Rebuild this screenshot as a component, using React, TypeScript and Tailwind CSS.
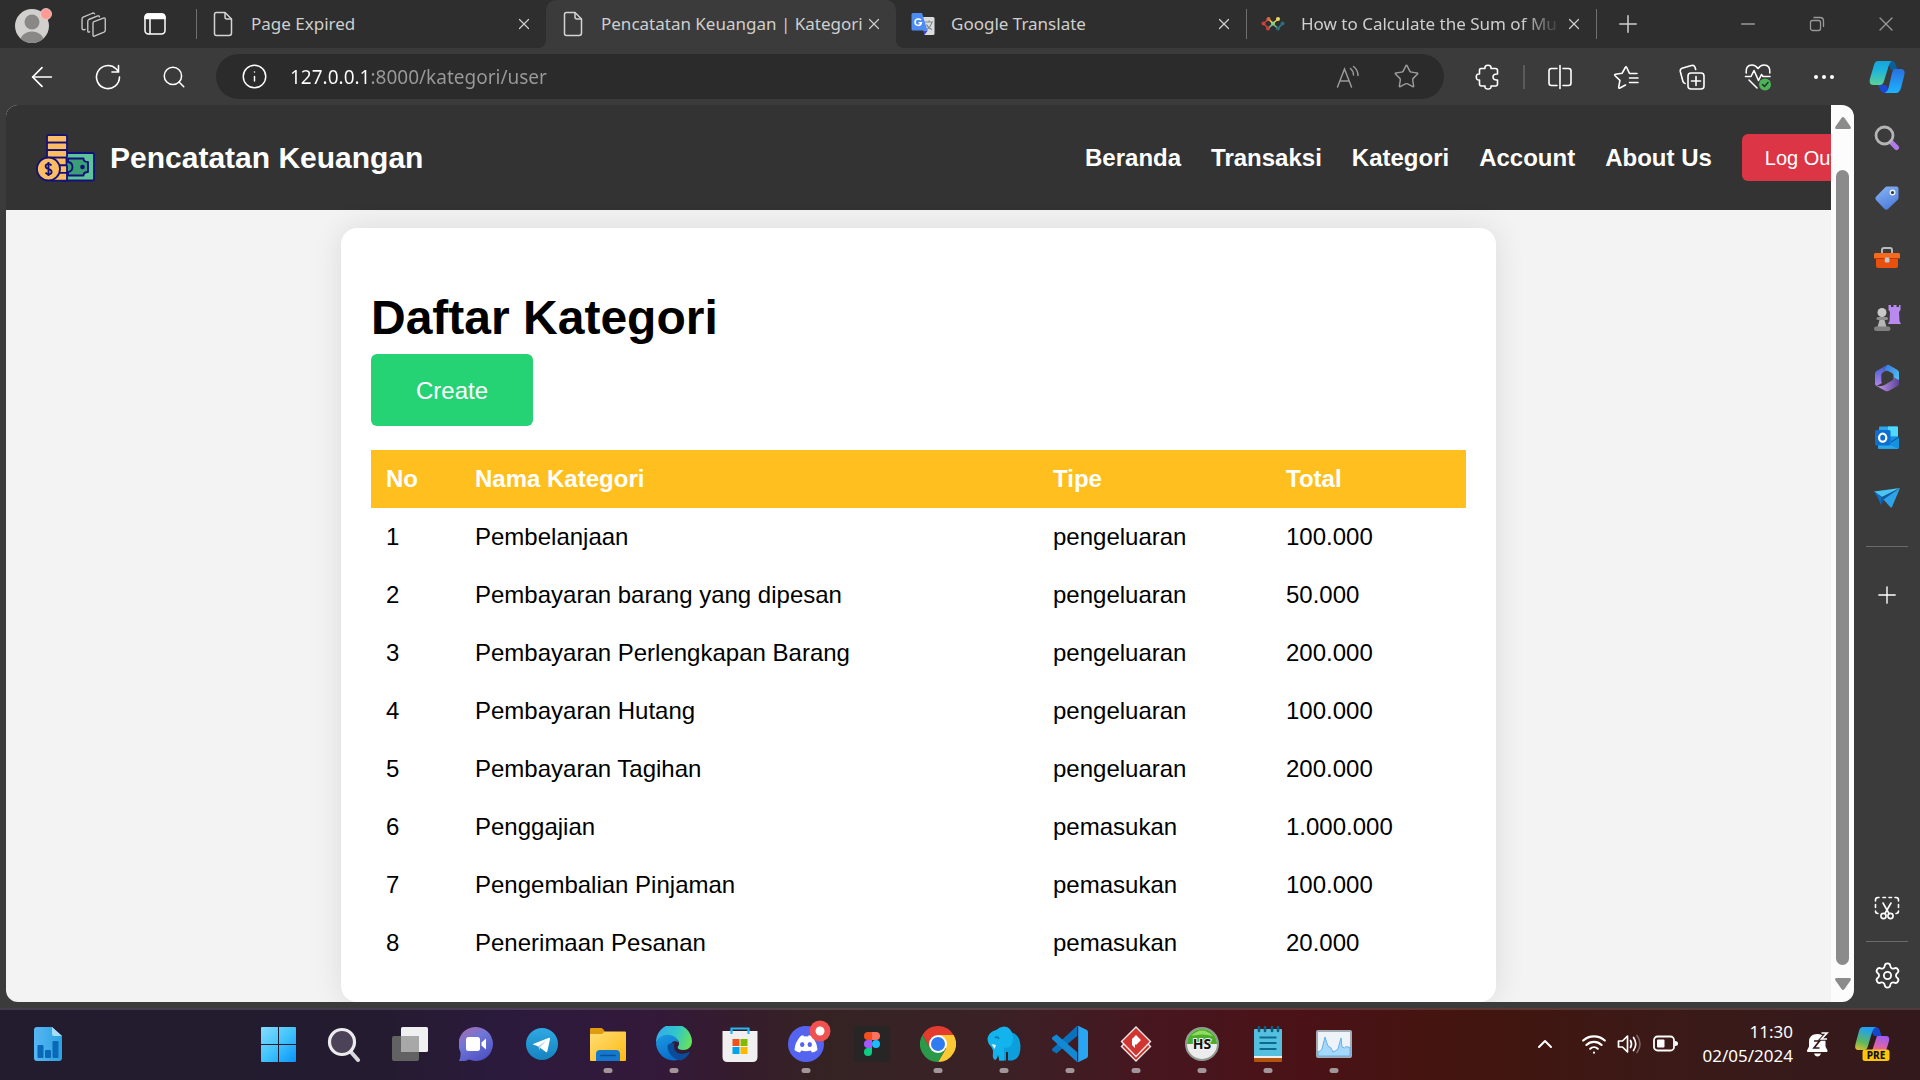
import React from "react";
import {
  ArrowLeft,
  ChevronUp,
  Info,
  Minus,
  Plus,
  Search,
  Settings,
  Star,
  Wifi,
  X,
} from "lucide-react";

/* ---------- Browser icons ---------- */

const Avatar = () => (
  <svg viewBox="0 0 38 38" className="size-[38px]">
    <defs>
      <clipPath id="avatar">
        <circle cx="18" cy="21" r="17" />
      </clipPath>
    </defs>
    <circle cx="18" cy="21" r="17" fill="#d2d0ce" />
    <g clipPath="url(#avatar)" fill="#8a8886">
      <circle cx="18" cy="17" r="7.5" />
      <ellipse cx="18" cy="37" rx="12" ry="10.5" />
    </g>
    <circle cx="32" cy="9" r="5.5" fill="#ff9b94" stroke="#e8d5d3" strokeWidth="0.8" />
  </svg>
);

const Workspaces = () => (
  <svg viewBox="0 0 24 24" className="size-[25px]" fill="none" stroke="#c8c8c8" strokeWidth="1.3" strokeLinejoin="round" strokeLinecap="round">
    <path d="M12.500 9.300 21.500 5.800q1.800-.6 1.800 1.200v10.500q0 1.200-1.200 1.800L13.300 23q-1.800.8-1.800-1.200V10.800q0-1.100 1-1.500Z" />
    <path d="M8.300 19 7.500 19.300q-1 .2-1-1V9q0-1.300 1-1.800L16 3.800q1.500-.5 1.700.8" />
    <path d="M4 16.800 3 17q-2 .3-2-1.500V6.800q0-1.300 1-1.800L11 1.200q1.600-.6 2 .6" />
  </svg>
);

const TabActions = () => (
  <svg viewBox="0 0 24 24" className="size-6" fill="none" stroke="#fff" strokeWidth="1.5">
    <rect x="2" y="2" width="20" height="20" rx="3.500" />
    <path d="M2 6.500V5.500Q2 2 5.500 2h13Q22 2 22 5.500V6.500Z" fill="#fff" />
    <path d="M7 7v15" />
  </svg>
);

const PageIcon = () => (
  <svg viewBox="0 0 20 26" className="h-[26px] w-5" fill="none" stroke="#d4d4d4" strokeWidth="1.500" strokeLinejoin="round">
    <path d="M3.500 1.500H12L18.500 8v14q0 2.500-2.500 2.500H3.500q-2 0-2-2v-19q0-2 2-2Z" />
    <path d="M12 1.500V6q0 2 2 2h4.500" />
  </svg>
);

const TranslateIcon = () => (
  <svg viewBox="0 0 24 24" className="size-6">
    <path d="M10 5h12q1.500 0 1.500 1.500v15q0 1.500-1.500 1.500h-8.500Z" fill="#dcdcdc" />
    <path d="M14 10h8M18 8.500V10m3 0q-1 5-6 8m.5-5.500q2 4 5.500 5" stroke="#7b8b90" fill="none" strokeWidth="1.200" />
    <path d="m12 18.500 4.800 0L13.500 23Z" fill="#3b48c4" />
    <path d="M2 1h9l5.500 17.500H2q-1.500 0-1.500-1.500V2.500Q.5 1 2 1Z" fill="#4d8bf5" />
    <path d="M10 8q-1.200-1.100-2.600-1a3.200 3.200 0 1 0 3 3.700H7.600" stroke="#fff" fill="none" strokeWidth="1.500" />
  </svg>
);

const NetworkFavicon = () => (
  <svg viewBox="0 0 24 16" className="h-4 w-6" strokeWidth="1.600" fill="none">
    <path d="M2.500 7.500 7.500 3M2.500 7.500 7 12" stroke="#c94040" />
    <path d="m7.500 3 4.500 4.500L17 3" stroke="#e3c862" />
    <path d="M7 12.500 12 8l5 4.500" stroke="#7fb59a" />
    <path d="m17 12.500 4.500-5" stroke="#2d7f8e" />
    <g fill="#c94040"><circle cx="2.500" cy="7.500" r="2" /><circle cx="7" cy="12.500" r="2" /></g>
    <circle cx="7.500" cy="3" r="2" fill="#e0683e" />
    <circle cx="12" cy="7.500" r="1.900" fill="#8fd07a" />
    <circle cx="17" cy="3" r="2" fill="#ecd964" />
    <g fill="#24727f"><circle cx="17" cy="12.500" r="2" /><circle cx="21.500" cy="7.500" r="1.900" /></g>
  </svg>
);

const RestoreIcon = () => (
  <svg viewBox="0 0 16 16" className="size-4" fill="none" stroke="#999" strokeWidth="1.300">
    <rect x="1.500" y="4.500" width="10" height="10" rx="2" />
    <path d="M4.500 1.500h6.500q3.500 0 3.500 3.500v6" />
  </svg>
);

const BackArrow = () => <ArrowLeft className="size-8" strokeWidth={1.3} />;

const Refresh = () => (
  <svg viewBox="0 0 26 26" className="size-[26px]" fill="none" stroke="#fff" strokeWidth="1.600" strokeLinecap="round">
    <path d="M24.500 13A11.500 11.500 0 1 1 21 4.800l2 2.200M23.500 1.500V8H17" />
  </svg>
);

const ReadAloud = () => (
  <svg viewBox="0 0 24 24" className="size-6" fill="none" stroke="#9a9a9a" strokeWidth="1.500" strokeLinecap="round">
    <path d="M1.500 22 8.500 4 15.500 22M4 16h9M14.500 3.500q3 2.500 3 6.500M17.500 1.500Q22 5 22 10.500" />
  </svg>
);

const Puzzle = () => (
  <svg viewBox="0 0 26 26" className="size-[26px]" fill="none" stroke="#fff" strokeWidth="1.600" strokeLinejoin="round">
    <path d="M6 4.500h4q-.5-3.200 3-3.200t3 3.200h4.500q2 0 2 2V10q-4.500-.3-4.500 3t4.500 3v4q0 2-2 2H16q.5 3-3 3t-3-3H6.500q-2 0-2-2v-4q-3.200.5-3.200-3t3.200-3V6.500q0-2 1.500-2Z" />
  </svg>
);

const SplitScreen = () => (
  <svg viewBox="0 0 26 26" className="size-[26px]" fill="none" stroke="#fff" strokeWidth="1.600" strokeLinecap="round">
    <path d="M10 4.500H4.500q-2.500 0-2.500 2.500v12q0 2.500 2.500 2.500H10M16 4.500h5.500Q24 4.500 24 7v12q0 2.500-2.500 2.500H16M13 1.500v23" />
  </svg>
);

const Favorites = () => (
  <svg viewBox="0 0 26 26" className="size-[26px]" fill="none" stroke="#fff" strokeWidth="1.600" strokeLinecap="round" strokeLinejoin="round">
    <path d="M24 9.500h-7.500l-2.800-6q-.7-1.400-1.400 0L9.200 9.200l-6.700 1q-1.500.3-.4 1.500l4.800 4.700-1.200 6.800q-.2 1.500 1.200.8l5.600-3M16.500 14H25M16.500 18.500H25" />
  </svg>
);

const Collections = () => (
  <svg viewBox="0 0 26 26" className="size-[26px]" fill="none" stroke="#fff" strokeWidth="1.600" strokeLinecap="round" strokeLinejoin="round">
    <rect x="9" y="9" width="16" height="16" rx="3" />
    <path d="M17 12.500v9M12.500 17h9M6 19.500q-1.700-.3-2.200-2.500L1.300 7.500Q.8 5 3 4.200L12.500 1.500q2.500-.6 3.400 1.500l.8 2.500" />
  </svg>
);

const Essentials = () => (
  <svg viewBox="0 0 28 28" className="size-7" fill="none" stroke="#fff" strokeWidth="1.600" strokeLinecap="round" strokeLinejoin="round">
    <path d="M2.200 10Q1.500 2 8 2q3.500 0 6 3.500Q16.500 2 20 2q6.500 0 5.800 8M1.500 13.500H7l3-6 4.500 10 3-6 1.500 2h7M5 17l8 8" />
    <circle cx="21" cy="21.500" r="6" fill="#4db25a" stroke="none" />
    <path d="m18.500 21.500 2 2 3.500-4" stroke="#1f3d22" />
  </svg>
);

const Dots = () => (
  <svg viewBox="0 0 22 6" className="h-1.5 w-[22px]" fill="#fff">
    <circle cx="3" cy="3" r="2" /><circle cx="11" cy="3" r="2" /><circle cx="19" cy="3" r="2" />
  </svg>
);

const CopilotEdge = () => (
  <svg viewBox="0 0 36 34" className="h-[34px] w-9">
    <defs>
      <linearGradient id="ceA" x1="0" y1="0" x2="0" y2="1"><stop offset="0" stopColor="#14a4dc" /><stop offset="0.400" stopColor="#1eb4dc" /><stop offset="1" stopColor="#5cd096" /></linearGradient>
      <linearGradient id="ceB" x1="0" y1="0" x2="0" y2="1"><stop offset="0" stopColor="#2b6fe0" /><stop offset="1" stopColor="#1cb4ff" /></linearGradient>
    </defs>
    <path d="M19 1h4q3 0 4 4l1.500 5H22Z" fill="#0a5f96" />
    <path d="M9 25h8l4 8h-5q-4 0-5-4Z" fill="#1947d8" />
    <path d="M9 1h14q-2.500 1-4 7l-4 13q-1 4-4 4H4.500Q-.5 25 1 18.500L5 5q1-4 4-4Z" fill="url(#ceA)" />
    <path d="M25 9h7q4.500 0 3.300 6L32 28q-1.500 5-5 5H15.500q3-1 4-5L23 13q.7-3 2-4Z" fill="url(#ceB)" />
  </svg>
);

/* ---------- Sidebar icons ---------- */

const SideSearch = () => (
  <svg viewBox="0 0 26 26" className="size-[26px]" fill="none">
    <path d="m17 17 5.500 5.500" stroke="#b07be8" strokeWidth="5" strokeLinecap="round" />
    <circle cx="10.500" cy="10.500" r="8.500" stroke="#b4b4b4" strokeWidth="2.800" />
  </svg>
);

const SideTag = () => (
  <svg viewBox="0 0 26 26" className="size-[26px]">
    <defs><linearGradient id="tag" x1="0" y1="0" x2="0.500" y2="1"><stop offset="0" stopColor="#8ab6f5" /><stop offset="1" stopColor="#4f7fdc" /></linearGradient></defs>
    <path d="M13 1.500h9.500q2 0 2 2V13q0 1.200-1 2L14 24q-1.800 1.500-3.500 0L2 15q-1.500-1.600 0-3.200L11 2.400q1-.9 2-.9Z" fill="url(#tag)" />
    <circle cx="18.500" cy="7.500" r="2.300" fill="#333" stroke="#e8f0ff" strokeWidth="1.400" />
  </svg>
);

const SideToolbox = () => (
  <svg viewBox="0 0 28 24" className="h-6 w-7">
    <path d="M9 8V4q0-2 2-2h6q2 0 2 2v4" fill="none" stroke="#b8bcc2" strokeWidth="1.900" />
    <path d="M3 11h22v9q0 2-2 2H5q-2 0-2-2Z" fill="#e8500e" />
    <path d="M2 7h24l1 1v4q0 1-1 1H2q-1 0-1-1V8Z" fill="#f46a1f" />
    <path d="M1 12.500h26" stroke="#b93a07" strokeWidth="1" />
    <rect x="11.800" y="11.500" width="4.600" height="5" rx="1.200" fill="#c3c9cf" />
  </svg>
);

const SideGames = () => (
  <svg viewBox="0 0 28 28" className="size-7">
    <path d="M15.500 1h2.500v2h2.500V1h3v2H26V1h1.500v5L26 8l.5 9 1.500 3H15l1.500-3L17 8l-1.500-2Z" fill="#b98aee" />
    <circle cx="9" cy="8.500" r="4.500" fill="#c8c8c8" />
    <rect x="3.500" y="13" width="11.500" height="3" rx="1.500" fill="#8f8f8f" />
    <path d="M6.500 16h5l2 7h-9Z" fill="#b5b5b5" />
    <rect x="1" y="22.500" width="16.500" height="4.500" rx="2.200" fill="#808080" />
  </svg>
);

const Side365 = () => (
  <svg viewBox="0 0 26 28" className="h-7 w-[26px]">
    <defs>
      <linearGradient id="m3a" x1="0" y1="0" x2="0" y2="1"><stop offset="0" stopColor="#3b5ed0" /><stop offset="1" stopColor="#b483ea" /></linearGradient>
      <linearGradient id="m3b" x1="0" y1="0" x2="1" y2="1"><stop offset="0" stopColor="#3a76dc" /><stop offset="1" stopColor="#52c7f4" /></linearGradient>
      <linearGradient id="m3c" x1="0" y1="0" x2="1" y2="0"><stop offset="0" stopColor="#c79af2" /><stop offset="1" stopColor="#5c4596" /></linearGradient>
    </defs>
    <path d="M13 1 2.500 7Q1 8 1 9.500v10q0 1.500 1.500 2.500L8 19q-.7-.7-.7-2V11q0-1.500 1.500-2.500L11 7q-1-4 2-6Z" fill="url(#m3a)" />
    <path d="M13 1q1-.5 2 0l8.500 5Q25 7 25 8.500V17l-5.500-3.500v-2q0-1.500-1.200-2.200L14 7q-1.500-.7-3 0-.5-4.500 2-6Z" fill="url(#m3b)" />
    <path d="M25 16v3.500q0 1.500-1.500 2.500L15 26.700q-2 1-4 0L2.500 22q4.500 1 8-1l7.500-4.500q1.500-1 1.500-3Z" fill="url(#m3c)" />
  </svg>
);

const SideOutlook = () => (
  <svg viewBox="0 0 26 26" className="size-[26px]">
    <rect x="5" y="1.500" width="19" height="12" rx="1" fill="#28a8ea" />
    <path d="M14 1.500h9q1 0 1 1V11H14Z" fill="#50d9ff" />
    <path d="M4 12h21v10.500q0 1.500-1.500 1.500H5.500Q4 24 4 22.500Z" fill="#1490df" />
    <path d="m4 14 20 9.800H5.500Q4 24 4 22.500Z" fill="#28a8ea" />
    <path d="m25 12-8 5" stroke="#0a4f8c" strokeWidth="1" />
    <rect x="1" y="5" width="15.500" height="15.500" rx="1.500" fill="#0f6fd0" />
    <ellipse cx="8.700" cy="12.700" rx="3.600" ry="4" fill="none" stroke="#fff" strokeWidth="2.200" />
  </svg>
);

const SidePlane = () => (
  <svg viewBox="0 0 28 22" className="h-[22px] w-7">
    <path d="M1 4.500 27 1 9 10Z" fill="#4ac3f7" />
    <path d="M1 4.500 9 10l-1 8-3-7Z" fill="#0e6fc0" />
    <path d="M8 18 9.500 10 27 1 12 12Z" fill="#0c5ca8" />
    <path d="M27 1 19 20q-.7 1-1.600.2L10.500 12.500Z" fill="#2ea3e8" />
  </svg>
);

const ScreenshotIcon = () => (
  <svg viewBox="0 0 26 24" className="h-6 w-[26px]" fill="none" stroke="#fff" strokeWidth="1.600" strokeLinecap="round">
    <path d="M1.500 5V4q0-2.500 2.500-2.500h1M9 1.500h2.500M15 1.500h2.500M21 1.500h1q2.500 0 2.500 2.500v1M24.500 8.500v3M1.500 8.500v3M1.500 15q0 2.500 2.500 2.500M24.500 15q0 2.500-2.500 2.500M9 7l6 10.500M17 7l-6 10.500" />
    <circle cx="9.500" cy="20" r="2.600" /><circle cx="16.500" cy="20" r="2.600" />
  </svg>
);

/* ---------- Site logo ---------- */

const MoneyLogo = () => (
  <svg viewBox="0 0 59 48" className="h-12 w-[59px]" stroke="#14107a" strokeWidth="1.800" strokeLinejoin="round">
    <rect x="24" y="19" width="34" height="27.500" rx="1.500" fill="#5dc49a" />
    <path d="M32 24.500h15.500q0 3.500 4.500 3.500v10q-4.500 0-4.500 3.500H32Z" fill="#3a9e76" />
    <circle cx="46.500" cy="33" r="2.300" fill="#14107a" stroke="none" />
    <path d="M29 27.500q7.500 0 7.500 5.500t-7.500 5.500Z" fill="#3a9e76" />
    <g fill="#fdbd63">
      <rect x="11" y="1.200" width="20" height="7.500" rx="1.300" />
      <rect x="11" y="8.700" width="20" height="7.500" rx="1.300" />
      <rect x="11" y="16.200" width="20" height="7.500" rx="1.300" />
      <rect x="14" y="23.700" width="16.500" height="7.600" rx="1" />
      <rect x="16" y="31.300" width="15" height="7.600" rx="1" />
      <rect x="14" y="38.900" width="17" height="7.800" rx="1" />
      <circle cx="12.500" cy="35" r="11.500" />
    </g>
    <path d="M15.500 31.500q-2.500-2.800-5.300-.8c-1.700 2.100.2 3.600 2.500 4.300s3.900 2.700 2.300 4.500q-3 1.800-5.500-.9M12.500 28v14" fill="none" strokeWidth="1.900" />
  </svg>
);

/* ---------- Taskbar icons ---------- */

const Widget = () => (
  <svg viewBox="0 0 28 34" className="h-[34px] w-7">
    <defs><linearGradient id="wd" x1="0" x2="1"><stop offset="0" stopColor="#58b6f4" /><stop offset="1" stopColor="#2aa2e0" /></linearGradient></defs>
    <path d="M3 0h15l10 9v22q0 3-3 3H3q-3 0-3-3V3q0-3 3-3Z" fill="url(#wd)" />
    <path d="M18 0l10 9h-8q-2 0-2-2Z" fill="#a8dcfb" />
    <g fill="#0a68b8"><rect x="3.500" y="18" width="6" height="13" rx="1" /><rect x="11" y="23" width="6" height="8" rx="1" /><rect x="18.500" y="14" width="6" height="17" rx="1" /></g>
  </svg>
);

const Start = () => (
  <svg viewBox="0 0 35 35" className="size-[35px]">
    <defs><linearGradient id="wn" gradientUnits="userSpaceOnUse" x1="0" y1="0" x2="35" y2="35"><stop offset="0" stopColor="#86dcff" /><stop offset="0.500" stopColor="#42c4fb" /><stop offset="1" stopColor="#0a94fb" /></linearGradient></defs>
    <path d="M1 0h16v17H0V1q0-1 1-1ZM18 0h16q1 0 1 1v16H18ZM0 18h17v17H1q-1 0-1-1ZM18 18h17v16q0 1-1 1H18Z" fill="url(#wn)" />
  </svg>
);

const TaskSearch = () => (
  <svg viewBox="0 0 34 36" className="h-9 w-[34px]" fill="none">
    <path d="m24 26 7 8" stroke="#d8d8dc" strokeWidth="4" strokeLinecap="round" />
    <circle cx="15" cy="16" r="12.500" fill="#4c4358" stroke="#ececee" strokeWidth="3.200" />
  </svg>
);

const TaskView = () => (
  <svg viewBox="0 0 36 34" className="h-[34px] w-9">
    <rect x="0" y="9" width="27" height="25" rx="2" fill="#626262" />
    <rect x="9" y="0" width="27" height="25" rx="1.500" fill="#f0f0f0" />
    <rect x="9" y="9" width="18" height="16" fill="#a8a8a8" />
  </svg>
);

const Chat = () => (
  <svg viewBox="0 0 34 34" className="size-[34px]">
    <defs><linearGradient id="ch" x1="0" y1="0" x2="0.600" y2="1"><stop offset="0" stopColor="#b06aa8" /><stop offset="0.450" stopColor="#7176d8" /><stop offset="1" stopColor="#5055c4" /></linearGradient></defs>
    <path d="M17 0a17 17 0 1 1-7 32.500Q5 35 0 34q2-4 1.500-9A17 17 0 0 1 17 0Z" fill="url(#ch)" />
    <rect x="7" y="10" width="14" height="14" rx="2.500" fill="#fff" />
    <path d="m22.500 15.500 4.500-4v11l-4.500-4Z" fill="#fff" />
  </svg>
);

const Telegram = () => (
  <svg viewBox="0 0 32 32" className="size-8">
    <defs><linearGradient id="tg" x1="0" y1="0" x2="0" y2="1"><stop offset="0" stopColor="#2fa9e3" /><stop offset="1" stopColor="#1583c0" /></linearGradient></defs>
    <circle cx="16" cy="16" r="16" fill="url(#tg)" />
    <path d="M6.500 16.200 23 9.800q1.200-.3 1 1.100l-2.700 12.500q-.4 1.200-1.500.5L12.500 18.600Z" fill="#fff" />
    <path d="m12.300 18.300 8-5.500-6 6-.5 3.800Z" fill="#a9cfe6" />
  </svg>
);

const Explorer = () => (
  <svg viewBox="0 0 36 33" className="h-[33px] w-9">
    <defs><linearGradient id="ex" x1="0" y1="0" x2="1" y2="1"><stop offset="0" stopColor="#ffde74" /><stop offset="1" stopColor="#fdb914" /></linearGradient></defs>
    <path d="M1 0h10q1 0 2 1l3 4H36v6H0V1q0-1 1-1Z" fill="#e09c0c" />
    <path d="M0 6h12l3-2.500H35q1 0 1 1V32q0 1-1 1H1q-1 0-1-1Z" fill="url(#ex)" />
    <path d="M6 33v-7q0-4 4-4h16q4 0 4 4v7Z" fill="#1478cc" />
    <path d="M11 27.500h14" stroke="#0a4f94" strokeWidth="1.600" strokeLinecap="round" />
  </svg>
);

const EdgeLogo = () => (
  <svg viewBox="0 0 36 36" className="size-9">
    <defs>
      <linearGradient id="e1" x1="0" y1="0.300" x2="1" y2="0.600"><stop offset="0" stopColor="#35a9ea" /><stop offset="0.500" stopColor="#30c5cf" /><stop offset="1" stopColor="#66e25a" /></linearGradient>
      <linearGradient id="e2" x1="0" y1="0" x2="0.500" y2="1"><stop offset="0" stopColor="#1b9be4" /><stop offset="1" stopColor="#0a6cc8" /></linearGradient>
    </defs>
    <path d="M0 17A18 18 0 0 1 36 15c0 6-4 9-8.500 9-5 0-6.500-1.500-5.500-3.500 2-3 1-6-2-7.500C13 9.500 3 10.500 0 17Z" fill="url(#e1)" />
    <path d="M0 18c1-7 8-10.500 14-9 5 1 8.500 4 8.500 8-2-3-8-2-8.500 4-.3 8 7 12 12 11.500A18 18 0 0 1 0 18Z" fill="url(#e2)" />
    <path d="M11.500 20c0 8 7 14 13.500 14.500 4-1.500 7-4.500 8.500-7.500.3-1-.5-1.200-1.300-.7-5 2.700-13.200 2.200-14.200-5.300-.2-1.500 0-2.500.7-3.500-3-1-7.200.5-7.200 2.500Z" fill="#0b4c9a" />
  </svg>
);

const Store = () => (
  <svg viewBox="0 0 36 36" className="size-9">
    <path d="M9.500 8V2.500h17V8" fill="none" stroke="#28b4ee" strokeWidth="2.200" />
    <path d="M.5 5h35v26q0 5-5 5h-25q-5 0-5-5Z" fill="#f0f0f0" />
    <path d="M9.500 8V4.500M26.500 8V4.500" stroke="#28b4ee" strokeWidth="2.200" />
    <path d="M10.500 13h7v7h-7Z" fill="#f1511b" /><path d="M18.500 13h7v7h-7Z" fill="#80ba01" />
    <path d="M10.500 21h7v7h-7Z" fill="#00a3ee" /><path d="M18.500 21h7v7h-7Z" fill="#fbb900" />
  </svg>
);

const Discord = () => (
  <svg viewBox="0 0 36 36" className="size-9 overflow-visible">
    <circle cx="18" cy="18" r="18" fill="#5564f0" />
    <path d="M12.500 10.200q1.200-.8 2.800-1l.7 1.300q2-.3 4 0l.7-1.300q1.600.2 2.900 1Q29 16 29.500 24q-2.500 2-5.500 2.600l-1.300-2.200q-4.700 1.600-9.400 0L12 26.600Q9 26 6.500 24 7 16 12.500 10.200Z" fill="#fff" />
    <ellipse cx="14.200" cy="18.500" rx="2.200" ry="2.500" fill="#5564f0" /><ellipse cx="21.800" cy="18.500" rx="2.200" ry="2.500" fill="#5564f0" />
    <circle cx="32" cy="5" r="10.500" fill="#f05252" /><circle cx="32" cy="5" r="4.500" fill="#fff" />
  </svg>
);

const Figma = () => (
  <svg viewBox="0 0 36 36" className="size-9">
    <rect width="36" height="36" rx="2" fill="#272525" />
    <path d="M18 6v8h-4a4 4 0 0 1 0-8Z" fill="#f24e1e" /><path d="M18 6h4a4 4 0 0 1 0 8h-4Z" fill="#ff7262" />
    <path d="M18 14v8h-4a4 4 0 0 1 0-8Z" fill="#a259ff" /><circle cx="22" cy="18" r="4" fill="#1abcfe" />
    <path d="M14 22h4v4a4 4 0 1 1-4-4Z" fill="#0acf83" />
  </svg>
);

const Chrome = () => (
  <svg viewBox="0 0 36 36" className="size-9">
    <path d="M2.400 9A18 18 0 0 1 33.600 9L18 9.500 10 22.500Z" fill="#e33b2e" />
    <path d="M33.600 9A18 18 0 0 1 18 36l8-13.500L18 9Z" fill="#fcc934" />
    <path d="M2.400 9A18 18 0 0 0 18 36l7.800-13.500H10.200Z" fill="#2a9a48" />
    <circle cx="18" cy="18" r="9" fill="#fff" /><circle cx="18" cy="18" r="7" fill="#2f7bf0" />
  </svg>
);

const Elephant = () => (
  <svg viewBox="0 0 34 36" className="h-9 w-[34px]">
    <path d="M23 6q10 2 10.500 14 0 13-8 14.500H21V26h-2v8.500h-7V24Z" fill="#0ba0dc" />
    <path d="M9 4q4-3.500 8-3.500 8 .5 9 10.500.5 10-7 11-1.500 0-2-1v13.500h-4.500L11 29q-1 4-2.500 5Q5 33 6 27q.5-4-3-7.500Q.5 17 .5 12 2 6 9 4Z" fill="#13b3ee" />
    <path d="M8 12q2-2.500 4 1" fill="none" stroke="#0873a5" strokeWidth="1.400" />
    <path d="m4.500 18 4.500 1-1.500 4Z" fill="#e8f7fd" />
  </svg>
);

const VsCode = () => (
  <svg viewBox="0 0 36 36" className="size-9">
    <path d="M25 0v10L4.500 27.500.5 25q-1-1.500 0-2.500Z" fill="#0a72bd" />
    <path d="M25 36V26L4.500 8.500.5 11q-1 1.500 0 2.500Z" fill="#1389d6" />
    <path d="M25 0q1-.3 2 .2l7.500 3.600Q36 4.500 36 6v24q0 1.500-1.500 2.200L27 35.800q-1 .5-2 .2l1.200-1V1Z" fill="#2aa5f2" />
  </svg>
);

const VisualParadigm = () => (
  <svg viewBox="0 0 32 36" className="h-9 w-8">
    <path d="M16 5.500 30.500 20.500 16 35 1.500 20.500Z" fill="#c9302c" stroke="#f5e9e9" strokeWidth="1.400" />
    <path d="M16 1 30.500 15.500 16 30.500 1.500 15.500Z" fill="#d03532" stroke="#f5e9e9" strokeWidth="1.400" />
    <path d="m16 9 5 5-5 5-1-1v4l-3-3v-6Z" fill="#fff" />
  </svg>
);

const HeidiSql = () => (
  <svg viewBox="0 0 34 34" className="size-[34px]">
    <circle cx="17" cy="17" r="16" fill="#ececec" stroke="#8f9a94" strokeWidth="2" />
    <path d="M2 17a15 15 0 0 1 30 0Z" fill="#4aae28" />
    <path d="M6 9q11-11 22 0-11-3-22 0Z" fill="#93da62" />
    <text x="17" y="22" textAnchor="middle" fontFamily="Noto Sans, sans-serif" fontWeight="700" fontSize="14" fill="#111" stroke="#f4f4f4" strokeWidth="2" paintOrder="stroke">HS</text>
  </svg>
);

const Notepad = () => (
  <svg viewBox="0 0 28 36" className="h-9 w-7">
    <rect x="0" y="30" width="28" height="6" rx="1" fill="#b2540d" />
    <rect x="0" y="28" width="28" height="4" fill="#efefef" />
    <path d="M1 3h26q1 0 1 1v26H0V4q0-1 1-1Z" fill="#55bfe0" />
    <path d="M5.500 11.500h17M5.500 17h17M5.500 23h17" stroke="#0d6a8e" strokeWidth="1.800" />
    <path d="M5 1v4M11 1v4M18 1v4M24 1v4" stroke="#0d5f80" strokeWidth="2.600" strokeLinecap="round" />
  </svg>
);

const TaskManager = () => (
  <svg viewBox="0 0 36 28" className="h-7 w-9">
    <rect x="1" y="1" width="34" height="26" rx="1" fill="#eef3f8" stroke="#a4acb6" strokeWidth="2" />
    <path d="M2 22q3-1 4-3l3-12q2 7 3 9l3 2 2 4q3-1 5-3l3-11 1 9q3 2 4-.5l4 1V26H2Z" fill="#a6d8fb" stroke="#5fb0ec" strokeWidth="1" />
  </svg>
);

const Volume = () => (
  <svg viewBox="0 0 26 22" className="h-[22px] w-[26px]" fill="none" stroke="#fff" strokeWidth="1.700" strokeLinecap="round" strokeLinejoin="round">
    <path d="M1.500 8v6h4l5 5V3l-5 5ZM13.500 7.500q2 3.500 0 7M16.500 4.500q4.500 6.500 0 13" />
    <path d="M20 2.500q6 8.500 0 17" stroke="#7d605c" />
  </svg>
);

const Battery = () => (
  <svg viewBox="0 0 26 18" className="h-[18px] w-[26px]">
    <rect x="1" y="1.500" width="20" height="14" rx="3.500" fill="none" stroke="#fff" strokeWidth="1.800" />
    <rect x="4" y="4.500" width="7.500" height="8" rx="1" fill="#fff" />
    <path d="M22 6q3 0 3 2.500T22 11Z" fill="#fff" />
  </svg>
);

const Bell = () => (
  <svg viewBox="0 0 24 26" className="h-[26px] w-6">
    <path d="M11.500 3q8 0 8 8v4.500l2 4q.3 1.500-1 1.500H2q-1.300 0-1-1.500l2-4V11q0-8 8.500-8Z" fill="#fff" />
    <path d="M8 22.500h7q-1 3-3.500 3T8 22.500Z" fill="#fff" />
    <path d="M8 10h5.500L8 17h5.500" fill="none" stroke="#38191a" strokeWidth="1.700" />
    <path d="M15.500 2h5.500l-5.500 6H21" fill="none" stroke="#38191a" strokeWidth="3.600" />
    <path d="M15.500 2h5.500l-5.500 6H21" fill="none" stroke="#fff" strokeWidth="1.700" />
  </svg>
);

const CopilotPre = () => (
  <svg viewBox="0 0 36 36" className="size-9">
    <defs>
      <linearGradient id="cpA" x1="0.300" y1="0" x2="0" y2="1"><stop offset="0" stopColor="#1fa0f2" /><stop offset="0.600" stopColor="#5fb85e" /><stop offset="1" stopColor="#e8c22a" /></linearGradient>
      <linearGradient id="cpB" x1="0.600" y1="0" x2="0.300" y2="1"><stop offset="0" stopColor="#a05cf0" /><stop offset="1" stopColor="#f5688a" /></linearGradient>
    </defs>
    <path d="M15 1h6q4 0 5 4l1.500 5H20Z" fill="#1747c8" />
    <path d="M9 1h13q-3 1-4.500 7L14 20q-1 4-4 4H4.500Q0 24 1.500 18L5 5q1-4 4-4Z" fill="url(#cpA)" />
    <path d="M23 10h9q4 0 3 5l-3 10H18Z" fill="url(#cpB)" />
    <rect x="8.500" y="23.500" width="27" height="11.500" rx="2.500" fill="#fdc50c" />
    <text x="22" y="32.500" textAnchor="middle" fontFamily="Noto Sans, sans-serif" fontWeight="800" fontSize="10" fill="#111">PRE</text>
  </svg>
);

/* ---------- Data ---------- */

const tabs = [
  { title: "Page Expired", icon: <PageIcon />, active: false, divider: true, fade: false },
  { title: "Pencatatan Keuangan | Kategori", icon: <PageIcon />, active: true, divider: false, fade: false },
  { title: "Google Translate", icon: <TranslateIcon />, active: false, divider: false, fade: false },
  { title: "How to Calculate the Sum of Mu", icon: <NetworkFavicon />, active: false, divider: true, fade: true },
];

const navLinks = ["Beranda", "Transaksi", "Kategori", "Account", "About Us"];

const categories = [
  ["Pembelanjaan", "pengeluaran", "100.000"],
  ["Pembayaran barang yang dipesan", "pengeluaran", "50.000"],
  ["Pembayaran Perlengkapan Barang", "pengeluaran", "200.000"],
  ["Pembayaran Hutang", "pengeluaran", "100.000"],
  ["Pembayaran Tagihan", "pengeluaran", "200.000"],
  ["Penggajian", "pemasukan", "1.000.000"],
  ["Pengembalian Pinjaman", "pemasukan", "100.000"],
  ["Penerimaan Pesanan", "pemasukan", "20.000"],
];

const sideApps = [
  { label: "Search", icon: <SideSearch /> },
  { label: "Shopping", icon: <SideTag /> },
  { label: "Tools", icon: <SideToolbox /> },
  { label: "Games", icon: <SideGames /> },
  { label: "Microsoft 365", icon: <Side365 /> },
  { label: "Outlook", icon: <SideOutlook /> },
  { label: "Drop", icon: <SidePlane /> },
];

const taskApps = [
  { label: "Start", icon: <Start />, running: false },
  { label: "Search", icon: <TaskSearch />, running: false },
  { label: "Task View", icon: <TaskView />, running: false },
  { label: "Chat", icon: <Chat />, running: false },
  { label: "Telegram", icon: <Telegram />, running: false },
  { label: "File Explorer", icon: <Explorer />, running: true },
  { label: "Edge", icon: <EdgeLogo />, running: true },
  { label: "Store", icon: <Store />, running: false },
  { label: "Discord", icon: <Discord />, running: true },
  { label: "Figma", icon: <Figma />, running: false },
  { label: "Chrome", icon: <Chrome />, running: true },
  { label: "Laragon", icon: <Elephant />, running: true },
  { label: "Visual Studio Code", icon: <VsCode />, running: true },
  { label: "Visual Paradigm", icon: <VisualParadigm />, running: true },
  { label: "HeidiSQL", icon: <HeidiSql />, running: true },
  { label: "Notepad", icon: <Notepad />, running: true },
  { label: "Task Manager", icon: <TaskManager />, running: true },
];

/* ---------- Sections ---------- */

function IconButton({ label, className, children }: { label: string; className: string; children: React.ReactNode }) {
  return (
    <button type="button" aria-label={label} className={`flex shrink-0 items-center justify-center ${className}`}>
      {children}
    </button>
  );
}

function TabStrip() {
  return (
    <div className="flex h-12 shrink-0 items-stretch bg-[#2e2e2e] text-[#cfcfcf]">
      <div className="flex w-[196px] shrink-0 items-center pl-0.5">
        <IconButton label="Profile" className="w-[61px]"><Avatar /></IconButton>
        <IconButton label="Workspaces" className="w-[61px]"><Workspaces /></IconButton>
        <IconButton label="Tab actions" className="w-[61px]"><TabActions /></IconButton>
      </div>
      {tabs.map((t) => (
        <div
          key={t.title}
          className={`relative flex w-[350px] min-w-0 items-center ${
            t.active
              ? "rounded-t-[10px] bg-[#3b3b3b] before:absolute before:bottom-0 before:-left-2 before:size-2 before:bg-[radial-gradient(circle_at_0_0,transparent_8px,#3b3b3b_8px)] after:absolute after:-right-2 after:bottom-0 after:size-2 after:bg-[radial-gradient(circle_at_100%_0,transparent_8px,#3b3b3b_8px)]"
              : ""
          }`}
        >
          <span className={`mr-3.5 h-[30px] w-px shrink-0 ${t.divider ? "bg-[#707070]" : ""}`} />
          <button type="button" className="flex min-w-0 flex-1 items-center gap-4">
            <span className="flex w-6 shrink-0 justify-center">{t.icon}</span>
            <span
              className={`flex-1 text-left text-[17px] leading-6 whitespace-nowrap ${
                t.fade ? "[mask-image:linear-gradient(to_right,#000_calc(100%-40px),transparent)]" : ""
              }`}
            >
              {t.title}
            </span>
          </button>
          <IconButton label={`Close ${t.title}`} className="mr-2.5 w-6"><X className="size-[18px]" strokeWidth={1.6} /></IconButton>
        </div>
      ))}
      <div className="h-[30px] w-px self-center bg-[#707070]" />
      <IconButton label="New tab" className="w-[62px]"><Plus className="size-7" strokeWidth={1.3} /></IconButton>
      <div className="flex-1" />
      <IconButton label="Minimize" className="w-[69px] text-[#999]"><Minus className="size-[22px]" strokeWidth={1.4} /></IconButton>
      <IconButton label="Restore" className="w-[69px]"><RestoreIcon /></IconButton>
      <IconButton label="Close window" className="w-[69px] text-[#999]"><X className="size-6" strokeWidth={1.3} /></IconButton>
    </div>
  );
}

function Toolbar() {
  return (
    <div className="flex h-[57px] shrink-0 items-center pl-[9px] text-white">
      <IconButton label="Back" className="w-[66px]"><BackArrow /></IconButton>
      <IconButton label="Refresh" className="w-[66px]"><Refresh /></IconButton>
      <IconButton label="Search" className="w-[66px]"><Search className="size-[26px]" strokeWidth={1.4} /></IconButton>
      <div className="mr-[11px] ml-[9px] flex h-[45px] min-w-0 flex-1 items-center rounded-full bg-[#2b2b2b] pr-2 pl-[25px]">
        <Info className="size-[27px] shrink-0" strokeWidth={1.3} />
        <input
          aria-label="Address"
          defaultValue="127.0.0.1:8000/kategori/user"
          className="ml-[22px] min-w-0 flex-1 bg-[linear-gradient(to_right,#ffffff_81px,#9a9a9a_81px)] bg-clip-text text-[19px] leading-7 text-transparent outline-none"
        />
        <IconButton label="Read aloud" className="w-[59px]"><ReadAloud /></IconButton>
        <IconButton label="Add to favorites" className="w-[59px] text-[#9a9a9a]"><Star className="size-[27px]" strokeWidth={1.3} /></IconButton>
      </div>
      <IconButton label="Extensions" className="w-[66px]"><Puzzle /></IconButton>
      <span className="mx-0.5 h-6 w-0.5 bg-[#5a5a5a]" />
      <IconButton label="Split screen" className="w-[66px]"><SplitScreen /></IconButton>
      <IconButton label="Favorites" className="w-[66px]"><Favorites /></IconButton>
      <IconButton label="Collections" className="w-[66px]"><Collections /></IconButton>
      <IconButton label="Browser essentials" className="w-[66px]"><Essentials /></IconButton>
      <IconButton label="Settings and more" className="w-[66px]"><Dots /></IconButton>
      <IconButton label="Copilot" className="mr-[3px] w-[60px]"><CopilotEdge /></IconButton>
    </div>
  );
}

function SiteHeader() {
  return (
    <header className="flex h-[105px] items-center overflow-hidden bg-[#333] pl-[30px] text-white">
      <a href="#home" className="flex items-center gap-[15px] text-3xl font-bold whitespace-nowrap">
        <MoneyLogo />
        Pencatatan Keuangan
      </a>
      <nav className="ml-auto flex gap-[30px] text-2xl font-bold whitespace-nowrap">
        {navLinks.map((l) => (
          <a key={l} href={`#${l}`}>{l}</a>
        ))}
      </nav>
      <button type="button" className="-mr-7 ml-[30px] h-[47px] shrink-0 rounded-md bg-[#dc3545] px-[23px] text-xl">
        Log Out
      </button>
    </header>
  );
}

function CategoryCard() {
  return (
    <main className="mx-auto mt-[18px] w-full max-w-[1155px] rounded-2xl bg-white p-[30px] text-black shadow-[0_0_30px_rgba(0,0,0,0.1)]">
      <h1 className="mt-8 text-5xl leading-[56px] font-bold">Daftar Kategori</h1>
      <button type="button" className="mt-2 h-[72px] rounded-md bg-[#25d375] px-[45px] pt-0.5 text-2xl text-white">
        Create
      </button>
      <table className="mt-6 w-full table-fixed text-left text-2xl leading-7">
        <colgroup>
          <col className="w-[89px]" />
          <col />
          <col className="w-[233px]" />
          <col className="w-[195px]" />
        </colgroup>
        <thead>
          <tr className="bg-[#ffc01f] text-white">
            {["No", "Nama Kategori", "Tipe", "Total"].map((h) => (
              <th key={h} scope="col" className="p-[15px] font-bold">{h}</th>
            ))}
          </tr>
        </thead>
        <tbody>
          {categories.map(([name, kind, total], i) => (
            <tr key={name}>
              <td className="p-[15px]">{i + 1}</td>
              <td className="p-[15px]">{name}</td>
              <td className="p-[15px]">{kind}</td>
              <td className="p-[15px]">{total}</td>
            </tr>
          ))}
        </tbody>
      </table>
    </main>
  );
}

function PageScrollbar() {
  return (
    <div className="flex w-[23px] shrink-0 flex-col items-center bg-[#fcfcfc] py-3">
      <svg viewBox="0 0 16 12" className="h-3 w-4 shrink-0" fill="#8b8b8b"><path d="M6.500 1q1.500-2 3 0l6 8.500q1 2.500-1 2.500h-13q-2 0-1-2.500Z" /></svg>
      <div className="mt-[41px] mb-[13px] w-[13px] flex-1 rounded-full bg-[#8b8b8b]" />
      <svg viewBox="0 0 16 12" className="h-3 w-4 shrink-0 rotate-180" fill="#8b8b8b"><path d="M6.500 1q1.500-2 3 0l6 8.500q1 2.500-1 2.500h-13q-2 0-1-2.500Z" /></svg>
    </div>
  );
}

function EdgeSidebar() {
  return (
    <aside className="flex w-[66px] shrink-0 flex-col items-center py-[3px] text-white">
      {sideApps.map((a) => (
        <IconButton key={a.label} label={a.label} className="size-15">{a.icon}</IconButton>
      ))}
      <hr className="my-[18px] w-[42px] border-[#6b6b6b]" />
      <IconButton label="Customize" className="size-15"><Plus className="size-7" strokeWidth={1.2} /></IconButton>
      <div className="flex-1" />
      <IconButton label="Screenshot" className="size-15"><ScreenshotIcon /></IconButton>
      <hr className="my-[3px] w-[42px] border-[#6b6b6b]" />
      <IconButton label="Settings" className="size-15"><Settings className="size-[29px]" strokeWidth={1.5} /></IconButton>
    </aside>
  );
}

function Taskbar() {
  return (
    <footer className="flex h-[72px] shrink-0 items-stretch border-t-2 border-white/15 bg-[linear-gradient(to_right,#231b2e_0%,#241b30_20%,#2b1a3c_26%,#33193a_34%,#351d2b_39%,#352324_43%,#3a2126_52%,#47161f_60%,#4a1216_68%,#42150f_77%,#3a1a18_88%,#33191c_100%)] bg-origin-border pb-0.5 text-white">
      <div className="flex w-[245px] shrink-0">
        <IconButton label="Widgets" className="w-24"><Widget /></IconButton>
      </div>
      {taskApps.map((a) => (
        <button key={a.label} type="button" aria-label={a.label} className="relative flex w-[66px] shrink-0 items-center justify-center">
          {a.icon}
          {a.running && <span className="absolute bottom-[5px] left-1/2 h-[5px] w-[9px] -translate-x-1/2 rounded-full bg-[#a3969b]" />}
        </button>
      ))}
      <div className="flex-1" />
      <IconButton label="Hidden icons" className="w-10"><ChevronUp className="size-6" strokeWidth={2} /></IconButton>
      <button type="button" aria-label="Network, volume and battery" className="ml-4 flex items-center gap-2.5">
        <Wifi className="size-[26px]" strokeWidth={2} />
        <Volume />
        <Battery />
      </button>
      <button type="button" className="ml-6 flex flex-col justify-center text-right text-[17px] leading-6">
        <span>11:30</span>
        <span>02/05/2024</span>
      </button>
      <IconButton label="Notifications" className="ml-[13px] w-6"><Bell /></IconButton>
      <IconButton label="Copilot preview" className="mr-[22px] ml-4 w-[52px]"><CopilotPre /></IconButton>
    </footer>
  );
}

export default function App() {
  return (
    <div className="flex h-screen flex-col overflow-hidden bg-[#3b3b3b] font-['Noto_Sans',sans-serif]">
      <TabStrip />
      <Toolbar />
      <div className="flex min-h-0 flex-1">
        <div className="mb-1.5 ml-1.5 flex min-w-0 flex-1 overflow-hidden rounded-xl">
          <div className="flex min-w-0 flex-1 flex-col overflow-hidden bg-[#f3f3f3] font-['Liberation_Sans',Arial,sans-serif]">
            <SiteHeader />
            <CategoryCard />
          </div>
          <PageScrollbar />
        </div>
        <EdgeSidebar />
      </div>
      <Taskbar />
    </div>
  );
}
